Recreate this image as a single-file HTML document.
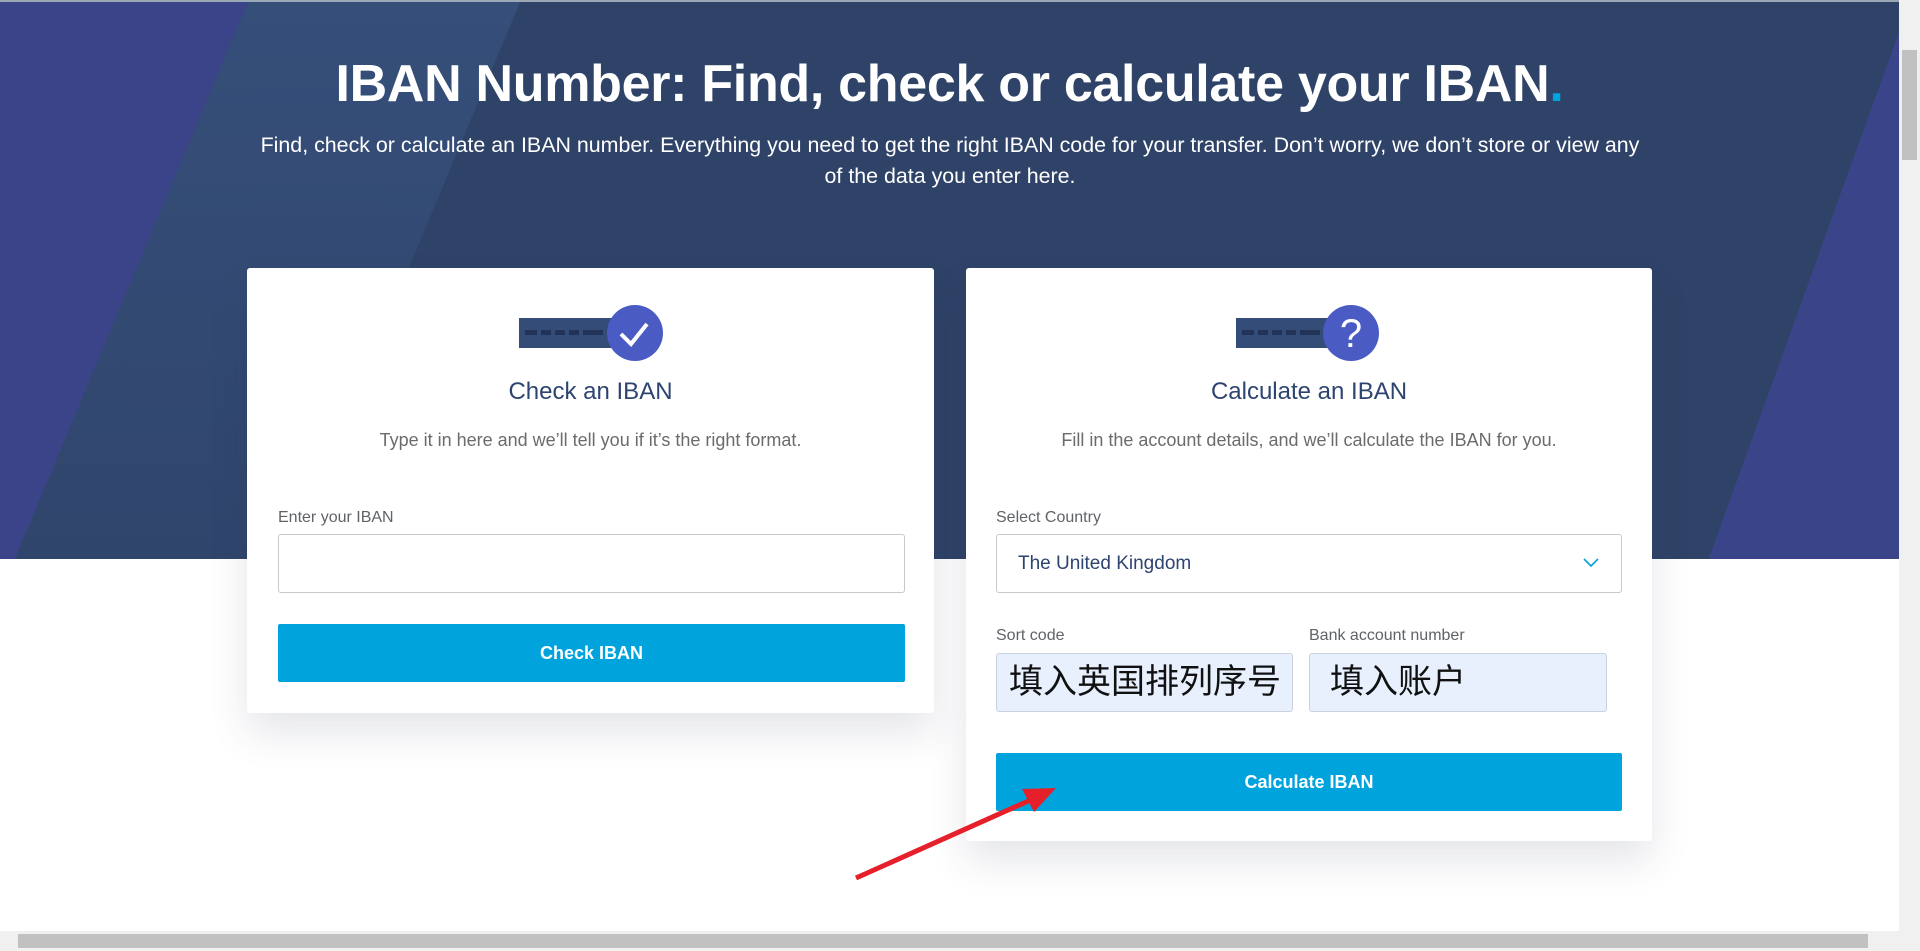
<!DOCTYPE html>
<html><head><meta charset="utf-8"><style>
*{box-sizing:border-box;margin:0;padding:0}
body{width:1920px;height:951px;overflow:hidden;background:#fff;font-family:"Liberation Sans","Noto Sans CJK SC",sans-serif;position:relative}
.hero{position:absolute;left:0;top:0;width:1899px;height:559px;background:#2f4368;overflow:hidden;border-top:2px solid #9aa9b5}
.poly{position:absolute;left:0;top:0;width:1899px;height:559px}
h1{position:absolute;top:52px;left:0;width:1899px;text-align:center;color:#fff;font-size:52px;font-weight:bold;letter-spacing:-0.3px}
h1 span{color:#00a3dc}
.sub{position:absolute;top:128px;left:200px;width:1500px;text-align:center;color:#fff;font-size:21.4px;line-height:31px}
.card{position:absolute;background:#fff;border-radius:3px;box-shadow:0 20px 40px rgba(40,50,80,.12)}
.icon{position:absolute;top:32px}
.ct{position:absolute;left:0;right:0;top:110px;text-align:center;color:#2e4470;font-size:24px}
.cd{position:absolute;left:0;right:0;top:162px;text-align:center;color:#6b6b6b;font-size:18px}
.lbl{position:absolute;color:#5f6368;font-size:16px}
.inp{position:absolute;border:1px solid #c9c9c9;border-radius:3px;background:#fff}
.btn{position:absolute;background:#00a3dc;color:#fff;font-weight:bold;font-size:18px;text-align:center;border-radius:2px}
.auto{position:absolute;background:#e8f0fe;border:1px solid #c9d2de;border-radius:3px;font-size:34px;color:#111;padding-left:12px;line-height:56px}
</style></head><body>
<div class="hero">
<svg class="poly" viewBox="0 0 1899 559"><defs><linearGradient id="g" x1="0" y1="0" x2="0" y2="1"><stop offset="0" stop-color="#354f7a"/><stop offset="1" stop-color="#30456c"/></linearGradient></defs><polygon points="248,0 520,0 286,559 14,559" fill="url(#g)"/><polygon points="0,0 248,0 14,559 0,559" fill="#3b4489"/><polygon points="1899,30 1899,559 1708,559" fill="#3a4488"/></svg>
<h1>IBAN Number: Find, check or calculate your IBAN<span>.</span></h1>
<div class="sub">Find, check or calculate an IBAN number. Everything you need to get the right IBAN code for your transfer. Don’t worry, we don’t store or view any<br>of the data you enter here.</div>
</div>

<div class="card" style="left:247px;top:268px;width:687px;height:445px">
<svg class="icon" style="left:272px" width="150" height="64" viewBox="0 0 150 64"><rect x="0" y="18" width="100" height="30" fill="#344c78"/><g fill="#233357"><rect x="6" y="30" width="12" height="5"/><rect x="22" y="30" width="10" height="5"/><rect x="36" y="30" width="10" height="5"/><rect x="50" y="30" width="10" height="5"/><rect x="64" y="30" width="20" height="5"/></g><circle cx="116" cy="33" r="28" fill="#4a5bc4"/><path d="M102 34 L112 44 L128 24" stroke="#fff" stroke-width="4" fill="none"/></svg>
<div class="ct">Check an IBAN</div>
<div class="cd">Type it in here and we’ll tell you if it’s the right format.</div>
<div class="lbl" style="left:31px;top:241px">Enter your IBAN</div>
<div class="inp" style="left:31px;top:266px;width:627px;height:59px"></div>
<div class="btn" style="left:31px;top:356px;width:627px;height:58px;line-height:58px">Check IBAN</div>
</div>

<div class="card" style="left:966px;top:268px;width:686px;height:573px">
<svg class="icon" style="left:270px" width="150" height="64" viewBox="0 0 150 64"><rect x="0" y="18" width="100" height="30" fill="#344c78"/><g fill="#233357"><rect x="6" y="30" width="12" height="5"/><rect x="22" y="30" width="10" height="5"/><rect x="36" y="30" width="10" height="5"/><rect x="50" y="30" width="10" height="5"/><rect x="64" y="30" width="20" height="5"/></g><circle cx="115" cy="33" r="28" fill="#4a5bc4"/><text x="115" y="47" text-anchor="middle" fill="#fff" font-size="40" font-family="Liberation Sans">?</text></svg>
<div class="ct">Calculate an IBAN</div>
<div class="cd">Fill in the account details, and we’ll calculate the IBAN for you.</div>
<div class="lbl" style="left:30px;top:241px">Select Country</div>
<div class="inp" style="left:30px;top:266px;width:626px;height:59px;font-size:19px;color:#2e4470;padding-left:21px;line-height:57px">The United Kingdom
<svg style="position:absolute;right:22px;top:23px" width="16" height="10" viewBox="0 0 16 10"><path d="M1 1 L8 8 L15 1" stroke="#00a3dc" stroke-width="1.6" fill="none"/></svg></div>
<div class="lbl" style="left:30px;top:359px">Sort code</div>
<div class="lbl" style="left:343px;top:359px">Bank account number</div>
<div class="auto" style="left:30px;top:385px;width:297px;height:59px">填入英国排列序号</div>
<div class="auto" style="left:343px;top:385px;width:298px;height:59px;padding-left:20px">填入账户</div>
<div class="btn" style="left:30px;top:485px;width:626px;height:58px;line-height:58px">Calculate IBAN</div>
</div>

<svg style="position:absolute;left:0;top:0" width="1920" height="951"><line x1="856" y1="878" x2="1035" y2="798" stroke="#e5202a" stroke-width="5"/><polygon points="1056,788 1022,789 1034,812" fill="#e5202a"/></svg>

<div style="position:absolute;left:1899px;top:0;width:21px;height:931px;background:#f0f0f0"><div style="position:absolute;left:3px;top:50px;width:15px;height:110px;background:#c1c1c1"></div></div>
<div style="position:absolute;left:0;top:931px;width:1920px;height:20px;background:#f0f0f0"><div style="position:absolute;left:18px;top:3px;width:1850px;height:14px;background:#c1c1c1"></div></div>
</body></html>
